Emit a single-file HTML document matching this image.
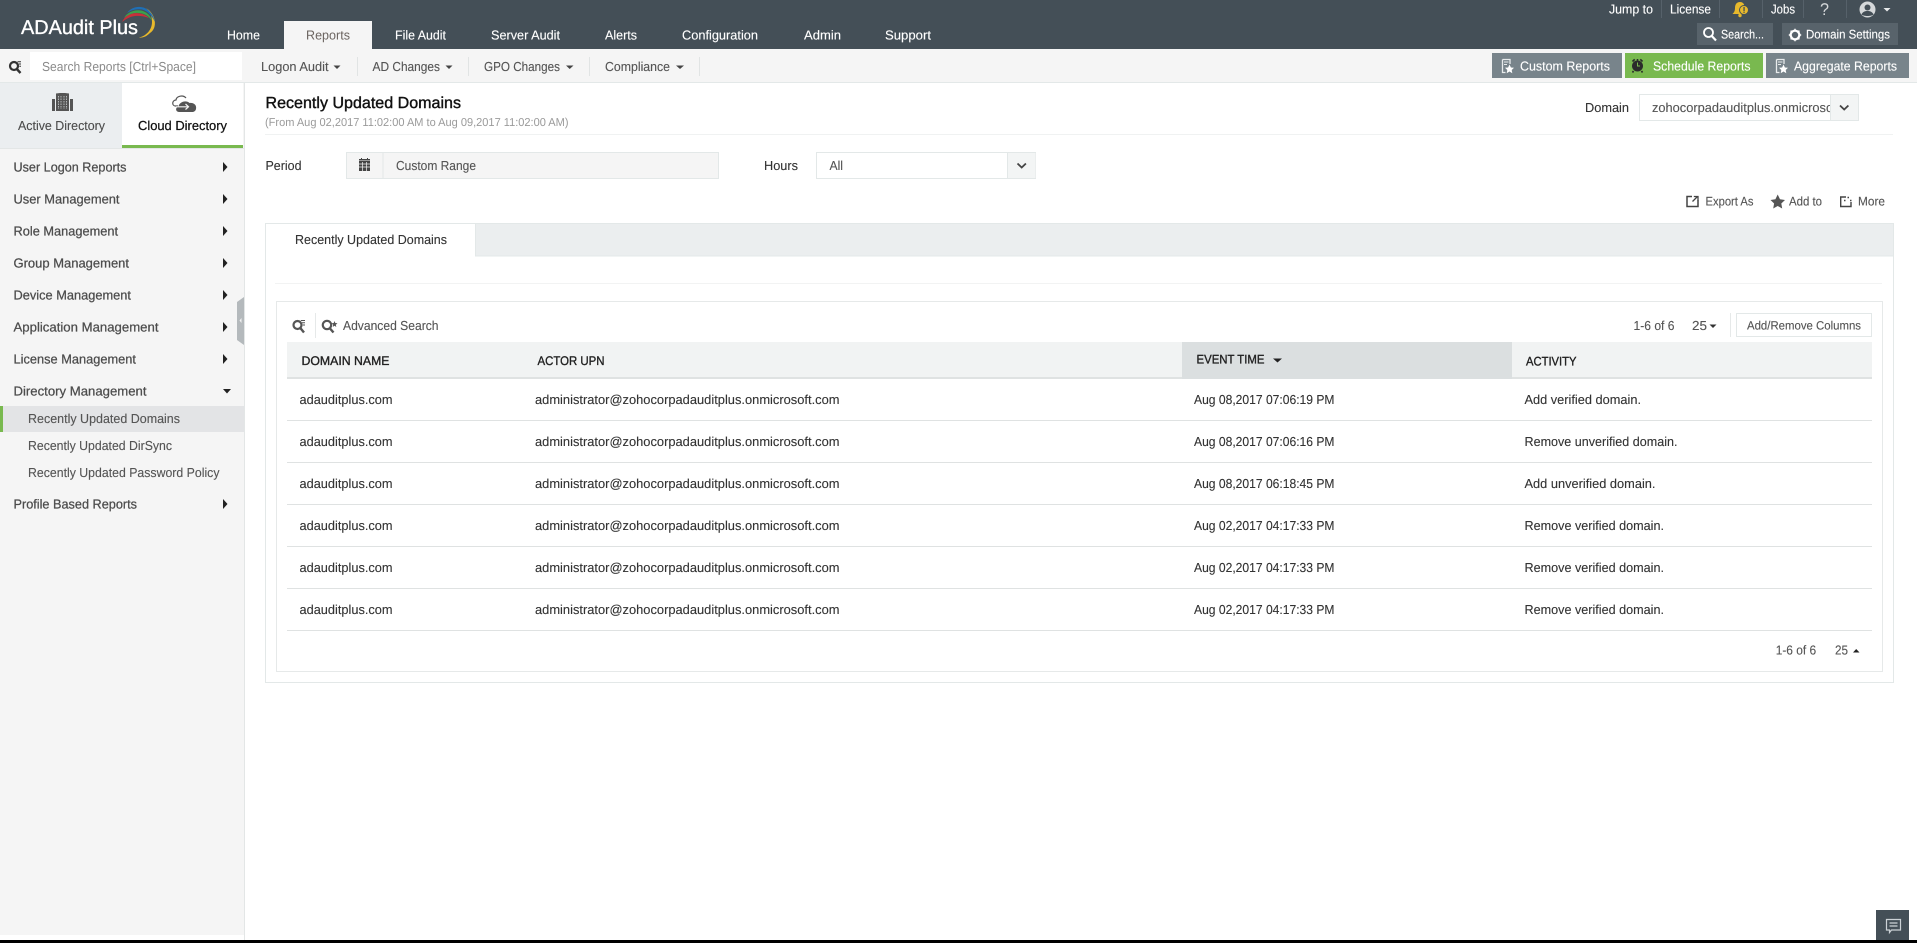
<!DOCTYPE html>
<html lang="en"><head><meta charset="utf-8"><title>ADAudit Plus - Recently Updated Domains</title>
<style>
html,body{margin:0;padding:0;background:#fff;width:1917px;height:943px;overflow:hidden}
svg{display:block}
text{font-family:"Liberation Sans",Arial,sans-serif;font-size:13px;fill:#444;text-rendering:geometricPrecision}
.w{fill:#fff;stroke:#fff;stroke-width:.12px}.s{fill:#555;stroke:#555;stroke-width:.12px}.d{fill:#333;stroke:#333;stroke-width:.12px}.k{fill:#111}.g{fill:#8a8a8a}
.b{stroke:#222;stroke-width:.35px;fill:#222}
.n{fill:#4c4c4c}
</style></head><body>
<svg xmlns="http://www.w3.org/2000/svg" width="1917" height="943" viewBox="0 0 1917 943">
<defs><clipPath id="dc"><rect x="1640" y="95" width="190.500" height="25"/></clipPath></defs>
<rect width="1917" height="943" fill="#fff"/>

<!-- header -->
<rect width="1917" height="49" fill="#444f57"/>
<text x="21" y="34" class="w" style="font-size:20px;stroke-width:.35px" textLength="117" lengthAdjust="spacingAndGlyphs">ADAudit Plus</text>
<path d="M146 8C156 14 158 28 150 33C146 37 142 38 139 37.500C146 36 152 30 152 22C152 16 150 11 146 8Z" fill="#e8b92c"/>
<path d="M127 13C132 6 142 5 148 10C152 13 154 18 155 22C152 16 148 11 142 9.500C137 8.500 131 10 127 13Z" fill="#1f6fb5"/>
<path d="M124 18C128 11 138 8 145 12C149 14 151 17 152 21C148 15 143 13 138 13C133 12.500 128 15 124 18Z" fill="#3ca04c"/>
<path d="M122 22C125 15 133 12 140 13.500C144 14 147 16 149 18C144 16 139 15.500 135 16C130 16.500 126 19 122 22Z" fill="#c8303a"/>

<rect x="284" y="21" width="88" height="28" fill="#f5f5f5"/>
<g>
<text x="227" y="39.500" class="w" textLength="33" lengthAdjust="spacingAndGlyphs">Home</text>
<text x="306" y="39.500" style="fill:#6b6460" textLength="44" lengthAdjust="spacingAndGlyphs">Reports</text>
<text x="395" y="39.500" class="w" textLength="51" lengthAdjust="spacingAndGlyphs">File Audit</text>
<text x="491" y="39.500" class="w" textLength="69" lengthAdjust="spacingAndGlyphs">Server Audit</text>
<text x="605" y="39.500" class="w" textLength="32" lengthAdjust="spacingAndGlyphs">Alerts</text>
<text x="682" y="39.500" class="w" textLength="76" lengthAdjust="spacingAndGlyphs">Configuration</text>
<text x="804" y="39.500" class="w" textLength="37" lengthAdjust="spacingAndGlyphs">Admin</text>
<text x="885" y="39.500" class="w" textLength="46" lengthAdjust="spacingAndGlyphs">Support</text>
</g>

<!-- top right -->
<text x="1609" y="13.500" class="w" textLength="44" lengthAdjust="spacingAndGlyphs">Jump to</text>
<text x="1670" y="13.500" class="w" textLength="41" lengthAdjust="spacingAndGlyphs">License</text>
<text x="1771" y="13.500" class="w" textLength="24" lengthAdjust="spacingAndGlyphs">Jobs</text>
<text x="1820" y="15" style="fill:#d5d8da;font-size:17px" textLength="9" lengthAdjust="spacingAndGlyphs">?</text>
<g stroke="#56616a" stroke-width="1"><path d="M1661.500 0V18M1719.500 0V18M1762.500 0V18M1803.500 0V18M1846.500 0V18"/></g>
<path d="M1740 2C1736.500 2 1735 4.500 1735 8C1735 11 1734 12.500 1732.500 14H1744C1742.800 12.500 1744 11 1744.500 6C1744 3.500 1742.500 2 1740 2Z" fill="#e8b92c"/>
<circle cx="1744" cy="10" r="4.500" fill="#e8b92c" stroke="#444f57" stroke-width="1"/>
<rect x="1743.400" y="7" width="1.300" height="4" fill="#444f57"/><rect x="1743.400" y="11.600" width="1.300" height="1.300" fill="#444f57"/>
<circle cx="1740" cy="15.500" r="1.700" fill="#e8b92c"/>
<circle cx="1867.500" cy="9.500" r="8" fill="#d5d8da"/>
<circle cx="1867.500" cy="7.500" r="3" fill="#444f57"/>
<path d="M1861.500 14.500C1862.500 11.800 1865 11 1867.500 11C1870 11 1872.500 11.800 1873.500 14.500C1871.500 16.500 1863.500 16.500 1861.500 14.500Z" fill="#444f57"/>
<path d="M1883.500 8H1890.500L1887 11.500Z" fill="#e8eaeb"/>

<rect x="1697" y="23" width="76" height="22" fill="#58636b"/>
<circle cx="1708.500" cy="32.500" r="4.500" fill="none" stroke="#fff" stroke-width="1.800"/>
<path d="M1711.800 36L1716 40.500" stroke="#fff" stroke-width="2.200"/>
<text x="1721" y="38.500" class="w" style="font-size:12.500px" textLength="43" lengthAdjust="spacingAndGlyphs">Search...</text>
<rect x="1782" y="23" width="116" height="22" fill="#58636b"/>
<circle cx="1795" cy="35" r="4.300" fill="none" stroke="#fff" stroke-width="2.200"/>
<path d="M1795 28.800V31M1795 39V41.200M1788.800 35H1791M1799 35H1801.200M1790.600 30.600L1792 32M1798 38L1799.400 39.400M1799.400 30.600L1798 32M1792 38L1790.600 39.400" stroke="#fff" stroke-width="1.400"/>
<text x="1806" y="38.500" class="w" style="font-size:12.500px" textLength="84" lengthAdjust="spacingAndGlyphs">Domain Settings</text>

<!-- sub header -->
<rect y="49" width="1917" height="33" fill="#f5f5f5"/>
<rect y="82" width="1917" height="1" fill="#e3e8e8"/>
<circle cx="14" cy="66" r="4" fill="none" stroke="#333" stroke-width="2.200"/>
<path d="M16.800 69L20.500 73" stroke="#333" stroke-width="2.400"/>
<path d="M17.500 61.700H21M18.700 64H21M19.300 66.300H21" stroke="#333" stroke-width="1"/>
<rect x="30" y="52" width="212" height="28" fill="#fff"/>
<text x="42" y="71" class="g" textLength="154" lengthAdjust="spacingAndGlyphs">Search Reports [Ctrl+Space]</text>
<text x="261" y="71" class="s" textLength="67.500" lengthAdjust="spacingAndGlyphs">Logon Audit</text>
<path d="M333.500 65.500H340.500L337 69Z" fill="#444"/>
<text x="372.500" y="71" class="s" textLength="67.500" lengthAdjust="spacingAndGlyphs">AD Changes</text>
<path d="M445.500 65.500H452.500L449 69Z" fill="#444"/>
<text x="484" y="71" class="s" textLength="76" lengthAdjust="spacingAndGlyphs">GPO Changes</text>
<path d="M566 65.500H573.500L569.700 69Z" fill="#444"/>
<text x="605" y="71" class="s" textLength="65" lengthAdjust="spacingAndGlyphs">Compliance</text>
<path d="M676 65.500H684L680 69Z" fill="#444"/>
<path d="M357.500 57V76M468.500 57V76M589.500 57V76M699.500 57V76" stroke="#e1e4e4" stroke-width="1"/>

<!-- report buttons -->
<rect x="1492" y="53" width="130" height="25" fill="#78848b"/>
<path d="M1502.500 59.500H1510V64M1502.500 59.500V72.500H1505.500" fill="none" stroke="#e8ebec" stroke-width="1.300"/>
<path d="M1504 62H1508.500M1504 64.500H1507" stroke="#e8ebec"/>
<path d="M1509.500 64.500L1510.900 67.500L1514 67.800L1511.700 70L1512.300 73.200L1509.500 71.500L1506.700 73.200L1507.300 70L1505 67.800L1508.100 67.500Z" fill="#fff"/>
<text x="1520" y="70.500" class="w" textLength="90" lengthAdjust="spacingAndGlyphs">Custom Reports</text>
<rect x="1625" y="53" width="138" height="25" fill="#79b94f"/>
<circle cx="1637.500" cy="66" r="5.500" fill="#2b2b2b"/>
<path d="M1632.500 61.500L1634.700 59.300M1642.500 61.500L1640.300 59.300M1637.500 59V60.500M1633.500 71L1632.500 72.500M1641.500 71L1642.500 72.500" stroke="#2b2b2b" stroke-width="1.600"/>
<path d="M1637.500 62.500V66H1640" fill="none" stroke="#79b94f" stroke-width="1"/>
<text x="1653" y="70.500" class="w" textLength="97.500" lengthAdjust="spacingAndGlyphs">Schedule Reports</text>
<rect x="1766" y="53" width="143" height="25" fill="#78848b"/>
<path d="M1776.500 59.500H1784V64M1776.500 59.500V72.500H1779.500" fill="none" stroke="#e8ebec" stroke-width="1.300"/>
<path d="M1778 62H1782.500M1778 64.500H1781" stroke="#e8ebec"/>
<path d="M1783.500 64.500L1784.900 67.500L1788 67.800L1785.700 70L1786.300 73.200L1783.500 71.500L1780.700 73.200L1781.300 70L1779 67.800L1782.100 67.500Z" fill="#fff"/>
<text x="1794" y="70.500" class="w" textLength="103" lengthAdjust="spacingAndGlyphs">Aggregate Reports</text>

<!-- sidebar -->
<rect y="83" width="244" height="852" fill="#f5f5f5"/>
<rect x="244" y="83" width="1" height="857" fill="#e3e6e6"/>
<rect y="83" width="122" height="65" fill="#ebeef0"/>
<rect y="148" width="244" height="1" fill="#e3e6e6"/>
<rect x="122" y="83" width="121" height="62" fill="#fff"/>
<rect x="122" y="145" width="121" height="3" fill="#79b94f"/>
<path fill-rule="evenodd" d="M56 93.500L60 93L65 93L69 93.500V111H56ZM52 99H55V111H52ZM70 99H73V111H70Z" fill="#555"/>
<path d="M58.500 96V109M61 96V109M64 96V109M66.500 96V109" stroke="#ccd0d2" stroke-width=".8" stroke-dasharray="1.500 1"/>
<path d="M178 106H175.500C172 106 171.500 100.500 176 100C176.500 96 183 94.500 186 98" fill="none" stroke="#555" stroke-width="1.200"/>
<path d="M179 112C175.500 112 175 107.500 178.500 106.500C179 102 186 99.500 189.500 103C193.500 102.500 197 105 196 109C195.500 111 194 112 192 112Z" fill="#555"/>
<path d="M176 106.800H188M185.500 104L188.500 106.800L185.500 109.500" fill="none" stroke="#f5f5f5" stroke-width="1.200"/>
<text x="18" y="130" class="n" style="stroke:#4c4c4c;stroke-width:.12px" textLength="87" lengthAdjust="spacingAndGlyphs">Active Directory</text>
<text x="138" y="130" class="k" style="stroke:#111;stroke-width:.25px" textLength="89" lengthAdjust="spacingAndGlyphs">Cloud Directory</text>

<g class="n">
<text x="13.500" y="171.500" class="n" style="stroke:#4c4c4c;stroke-width:.25px" textLength="113" lengthAdjust="spacingAndGlyphs">User Logon Reports</text>
<text x="13.500" y="203.500" class="n" style="stroke:#4c4c4c;stroke-width:.25px" textLength="106" lengthAdjust="spacingAndGlyphs">User Management</text>
<text x="13.500" y="235.500" class="n" style="stroke:#4c4c4c;stroke-width:.25px" textLength="104.500" lengthAdjust="spacingAndGlyphs">Role Management</text>
<text x="13.500" y="267.500" class="n" style="stroke:#4c4c4c;stroke-width:.25px" textLength="115.500" lengthAdjust="spacingAndGlyphs">Group Management</text>
<text x="13.500" y="299.500" class="n" style="stroke:#4c4c4c;stroke-width:.25px" textLength="117.500" lengthAdjust="spacingAndGlyphs">Device Management</text>
<text x="13.500" y="331.500" class="n" style="stroke:#4c4c4c;stroke-width:.25px" textLength="145" lengthAdjust="spacingAndGlyphs">Application Management</text>
<text x="13.500" y="363.500" class="n" style="stroke:#4c4c4c;stroke-width:.25px" textLength="122.500" lengthAdjust="spacingAndGlyphs">License Management</text>
<text x="13.500" y="395.500" class="n" style="stroke:#4c4c4c;stroke-width:.25px" textLength="133" lengthAdjust="spacingAndGlyphs">Directory Management</text>
<text x="13.500" y="508.500" class="n" style="stroke:#4c4c4c;stroke-width:.25px" textLength="123.500" lengthAdjust="spacingAndGlyphs">Profile Based Reports</text>
</g>
<path d="M223 162L227.500 167L223 172ZM223 194L227.500 199L223 204ZM223 226L227.500 231L223 236ZM223 258L227.500 263L223 268ZM223 290L227.500 295L223 300ZM223 322L227.500 327L223 332ZM223 354L227.500 359L223 364ZM223 499L227.500 504L223 509ZM223 389H231L227 393.500Z" fill="#222"/>
<rect y="406" width="244" height="26" fill="#e3e4e6"/>
<rect y="406" width="3" height="26" fill="#79b94f"/>
<text x="28" y="423" class="s" textLength="152" lengthAdjust="spacingAndGlyphs">Recently Updated Domains</text>
<text x="28" y="450" class="s" textLength="144" lengthAdjust="spacingAndGlyphs">Recently Updated DirSync</text>
<text x="28" y="477" class="s" textLength="191.500" lengthAdjust="spacingAndGlyphs">Recently Updated Password Policy</text>
<path d="M244 297V345L237 340V302Z" fill="#b4b9bc"/>
<path d="M241.500 318L239.500 320.500L241.500 323Z" fill="#f2f2f2"/>

<!-- title -->
<text x="265.500" y="108" class="k" style="font-size:16px;stroke:#111;stroke-width:.4px" textLength="195.500" lengthAdjust="spacingAndGlyphs">Recently Updated Domains</text>
<text x="265" y="126" style="font-size:11.500px;fill:#9a9a9a" textLength="303.500" lengthAdjust="spacingAndGlyphs">(From Aug 02,2017 11:02:00 AM to Aug 09,2017 11:02:00 AM)</text>
<rect x="265" y="134" width="1628" height="1" fill="#f0f2f2"/>
<text x="1585" y="112" class="d" textLength="44" lengthAdjust="spacingAndGlyphs">Domain</text>
<rect x="1639.500" y="94.500" width="219" height="26" fill="#fff" stroke="#e3e8e8"/>
<g clip-path="url(#dc)"><text x="1652" y="112" class="s" textLength="216" lengthAdjust="spacingAndGlyphs">zohocorpadauditplus.onmicrosoft.com</text></g>
<rect x="1830.500" y="95" width="27.500" height="25" fill="#f3f5f5"/>
<path d="M1830.500 95V120" stroke="#e3e8e8"/>
<path d="M1840 105.500L1844.200 109.500L1848.400 105.500" fill="none" stroke="#444" stroke-width="1.800"/>

<!-- filters -->
<text x="265.500" y="170" class="d" textLength="36" lengthAdjust="spacingAndGlyphs">Period</text>
<rect x="346.500" y="152.500" width="372" height="26" fill="#f5f5f5" stroke="#e3e8e8"/>
<path d="M383 153V178" stroke="#e3e8e8"/>
<rect x="359" y="161" width="11" height="10" fill="#444"/>
<rect x="359" y="159" width="11" height="1.500" fill="#444"/>
<path d="M361.500 158V160M367.500 158V160" stroke="#444"/>
<path d="M359 164H370M359 167H370M362.500 162V171M366.500 162V171" stroke="#f5f5f5" stroke-width=".7"/>
<text x="396" y="170" class="s" textLength="80" lengthAdjust="spacingAndGlyphs">Custom Range</text>
<text x="764" y="170" class="d" textLength="34" lengthAdjust="spacingAndGlyphs">Hours</text>
<rect x="816.500" y="152.500" width="219" height="26" fill="#fff" stroke="#e3e8e8"/>
<rect x="1007.500" y="153" width="28" height="25" fill="#f3f5f5"/>
<path d="M1007.500 153V178" stroke="#e3e8e8"/>
<path d="M1017.500 163.500L1021.700 167.500L1025.900 163.500" fill="none" stroke="#444" stroke-width="1.800"/>
<text x="829.500" y="170" class="s" textLength="13.500" lengthAdjust="spacingAndGlyphs">All</text>

<!-- export row -->
<path d="M1692 196.500H1687V206.500H1698V200" fill="none" stroke="#444" stroke-width="1.500"/>
<path d="M1692.500 201.500L1697 197M1693.800 196.500H1698V200.500" fill="none" stroke="#444" stroke-width="1.300"/>
<text x="1705.500" y="205.500" class="s" style="font-size:12.500px" textLength="48" lengthAdjust="spacingAndGlyphs">Export As</text>
<path d="M1777.700 194.500L1780 199.300L1785 200L1781.300 203.500L1782.200 208.500L1777.700 206L1773.200 208.500L1774.100 203.500L1770.500 200L1775.400 199.300Z" fill="#555"/>
<text x="1789" y="205.500" class="s" style="font-size:12.500px" textLength="33" lengthAdjust="spacingAndGlyphs">Add to</text>
<path d="M1846 197H1840.700V206.500H1851V202" fill="none" stroke="#444" stroke-width="1.400"/>
<path d="M1844 200.500H1845.500M1847.500 197.500H1849M1850 200.500H1851.500" stroke="#444" stroke-width="1.500"/>
<text x="1858" y="205.500" class="s" style="font-size:12.500px" textLength="27" lengthAdjust="spacingAndGlyphs">More</text>

<!-- panel -->
<rect x="265.500" y="223.500" width="1628" height="459" fill="#fff" stroke="#e3e8e8"/>
<rect x="475.500" y="224" width="1417.500" height="31.500" fill="#ebeeef"/>
<path d="M475.500 224V256H1893" fill="none" stroke="#e3e8e8"/>
<text x="295" y="244" class="d" textLength="152" lengthAdjust="spacingAndGlyphs">Recently Updated Domains</text>
<rect x="275" y="283" width="1607" height="1" fill="#f2f3f3"/>
<rect x="276.500" y="301.500" width="1606" height="370" fill="#fff" stroke="#e6e9e9"/>

<!-- toolbar -->
<circle cx="297.500" cy="325" r="4" fill="none" stroke="#555" stroke-width="2.200"/>
<path d="M300.300 328L304 332.500" stroke="#555" stroke-width="2.400"/>
<path d="M300.800 320.500H305M302 322.800H305M302.800 325H305" stroke="#555" stroke-width="1"/>
<path d="M315.500 313V338" stroke="#e6e9e9"/>
<circle cx="327" cy="325" r="4.200" fill="none" stroke="#555" stroke-width="2.200"/>
<path d="M330 328.500L333.500 332.500" stroke="#555" stroke-width="2.400"/>
<path d="M334.500 321L335.300 323L337.500 323.300L335.800 324.700L336.300 327L334.500 325.800L332.700 327L333.200 324.700L331.500 323.300L333.700 323Z" fill="#555"/>
<text x="343" y="330" class="s" textLength="95.500" lengthAdjust="spacingAndGlyphs">Advanced Search</text>
<text x="1633.500" y="330" class="s" textLength="41" lengthAdjust="spacingAndGlyphs">1-6 of 6</text>
<text x="1692" y="330" class="s" textLength="15" lengthAdjust="spacingAndGlyphs">25</text>
<path d="M1709.500 324.500H1716.500L1713 328Z" fill="#333"/>
<path d="M1730.500 313V337" stroke="#e6e9e9"/>
<rect x="1736.500" y="313.500" width="135" height="23" fill="#fff" stroke="#e3e8e8"/>
<text x="1747" y="329.500" class="s" style="font-size:12px" textLength="114" lengthAdjust="spacingAndGlyphs">Add/Remove Columns</text>

<!-- table head -->
<rect x="287" y="342" width="1585" height="35" fill="#f1f3f3"/>
<rect x="287" y="377" width="1585" height="2" fill="#dfe2e2"/>
<rect x="1182" y="342" width="330" height="37" fill="#dbdfe0"/>
<text x="301.500" y="365" class="b" style="font-size:12.500px" textLength="88" lengthAdjust="spacingAndGlyphs">DOMAIN NAME</text>
<text x="537.500" y="365" class="b" style="font-size:12.500px" textLength="67" lengthAdjust="spacingAndGlyphs">ACTOR UPN</text>
<text x="1196.500" y="363.500" class="b" style="font-size:12.500px" textLength="68" lengthAdjust="spacingAndGlyphs">EVENT TIME</text>
<path d="M1273 358.500H1282L1277.500 362.500Z" fill="#222"/>
<text x="1526" y="365.500" class="b" style="font-size:12.500px" textLength="50.500" lengthAdjust="spacingAndGlyphs">ACTIVITY</text>

<!-- rows -->
<g>
<text x="299.500" y="404" class="d" textLength="93" lengthAdjust="spacingAndGlyphs">adauditplus.com</text>
<text x="535" y="404" class="d" textLength="304.500" lengthAdjust="spacingAndGlyphs">administrator@zohocorpadauditplus.onmicrosoft.com</text>
<text x="1194" y="404" class="d" textLength="140.500" lengthAdjust="spacingAndGlyphs">Aug 08,2017 07:06:19 PM</text>
<text x="1524.500" y="404" class="d" textLength="116.500" lengthAdjust="spacingAndGlyphs">Add verified domain.</text>
<rect x="287" y="420" width="1585" height="1" fill="#dfe2e2"/>

<text x="299.500" y="446" class="d" textLength="93" lengthAdjust="spacingAndGlyphs">adauditplus.com</text>
<text x="535" y="446" class="d" textLength="304.500" lengthAdjust="spacingAndGlyphs">administrator@zohocorpadauditplus.onmicrosoft.com</text>
<text x="1194" y="446" class="d" textLength="140.500" lengthAdjust="spacingAndGlyphs">Aug 08,2017 07:06:16 PM</text>
<text x="1524.500" y="446" class="d" textLength="153" lengthAdjust="spacingAndGlyphs">Remove unverified domain.</text>
<rect x="287" y="462" width="1585" height="1" fill="#dfe2e2"/>

<text x="299.500" y="488" class="d" textLength="93" lengthAdjust="spacingAndGlyphs">adauditplus.com</text>
<text x="535" y="488" class="d" textLength="304.500" lengthAdjust="spacingAndGlyphs">administrator@zohocorpadauditplus.onmicrosoft.com</text>
<text x="1194" y="488" class="d" textLength="140.500" lengthAdjust="spacingAndGlyphs">Aug 08,2017 06:18:45 PM</text>
<text x="1524.500" y="488" class="d" textLength="131" lengthAdjust="spacingAndGlyphs">Add unverified domain.</text>
<rect x="287" y="504" width="1585" height="1" fill="#dfe2e2"/>

<text x="299.500" y="530" class="d" textLength="93" lengthAdjust="spacingAndGlyphs">adauditplus.com</text>
<text x="535" y="530" class="d" textLength="304.500" lengthAdjust="spacingAndGlyphs">administrator@zohocorpadauditplus.onmicrosoft.com</text>
<text x="1194" y="530" class="d" textLength="140.500" lengthAdjust="spacingAndGlyphs">Aug 02,2017 04:17:33 PM</text>
<text x="1524.500" y="530" class="d" textLength="139.500" lengthAdjust="spacingAndGlyphs">Remove verified domain.</text>
<rect x="287" y="546" width="1585" height="1" fill="#dfe2e2"/>

<text x="299.500" y="572" class="d" textLength="93" lengthAdjust="spacingAndGlyphs">adauditplus.com</text>
<text x="535" y="572" class="d" textLength="304.500" lengthAdjust="spacingAndGlyphs">administrator@zohocorpadauditplus.onmicrosoft.com</text>
<text x="1194" y="572" class="d" textLength="140.500" lengthAdjust="spacingAndGlyphs">Aug 02,2017 04:17:33 PM</text>
<text x="1524.500" y="572" class="d" textLength="139.500" lengthAdjust="spacingAndGlyphs">Remove verified domain.</text>
<rect x="287" y="588" width="1585" height="1" fill="#dfe2e2"/>

<text x="299.500" y="614" class="d" textLength="93" lengthAdjust="spacingAndGlyphs">adauditplus.com</text>
<text x="535" y="614" class="d" textLength="304.500" lengthAdjust="spacingAndGlyphs">administrator@zohocorpadauditplus.onmicrosoft.com</text>
<text x="1194" y="614" class="d" textLength="140.500" lengthAdjust="spacingAndGlyphs">Aug 02,2017 04:17:33 PM</text>
<text x="1524.500" y="614" class="d" textLength="139.500" lengthAdjust="spacingAndGlyphs">Remove verified domain.</text>
<rect x="287" y="630" width="1585" height="1" fill="#dfe2e2"/>
</g>

<text x="1775.700" y="654.500" class="s" textLength="40.500" lengthAdjust="spacingAndGlyphs">1-6 of 6</text>
<text x="1835" y="654.500" class="s" textLength="13" lengthAdjust="spacingAndGlyphs">25</text>
<path d="M1853 652.500H1859.500L1856.200 649Z" fill="#222"/>

<!-- chat -->
<rect x="1876" y="910" width="33" height="30" fill="#444f57"/>
<path d="M1886.500 919.500H1900.500V930H1891.500L1889.500 932.500V930H1886.500Z" fill="none" stroke="#ccd2d6" stroke-width="1.200"/>
<path d="M1889.500 923H1897.500M1889.500 926H1897.500" stroke="#ccd2d6" stroke-width="1.200"/>

<!-- window edge -->
<rect y="940" width="1917" height="3" fill="#000"/>
</svg>
</body></html>
